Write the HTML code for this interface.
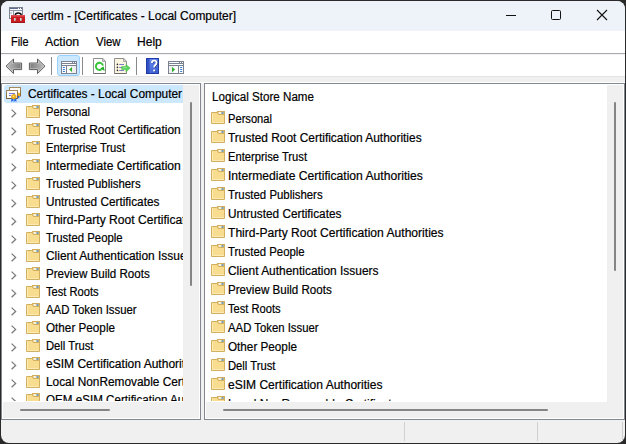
<!DOCTYPE html>
<html><head><meta charset="utf-8"><style>
html,body{margin:0;padding:0;width:626px;height:444px;overflow:hidden;background:#2A2A2A}
.r{position:absolute;box-sizing:content-box}
.fo{position:absolute;overflow:visible}
.t{position:absolute;font-family:"Liberation Sans", sans-serif;font-size:12px;line-height:14px;white-space:nowrap;color:#000;transform-origin:0 0;-webkit-text-stroke:0.2px #000}
</style></head><body>
<div class="r" style="left:1px;top:1px;width:624px;height:442px;background:#f0f0f0;border-radius:8px;overflow:hidden">
<div class="r" style="left:0;top:0;width:624px;height:30px;background:#EEF2F9"></div>
<div class="r" style="left:0;top:30px;width:624px;height:22px;background:#fff"></div>
<div class="r" style="left:0;top:52px;width:624px;height:1px;background:#A9A9A9"></div>
<div class="r" style="left:0;top:53px;width:624px;height:22px;background:#fff"></div>
<div class="r" style="left:0;top:53px;width:624px;height:1px;background:#F1F3F8"></div>
<div class="r" style="left:0;top:75px;width:624px;height:1px;background:#E3E3E3"></div>
</div>
<svg class="fo" width="20" height="20" viewBox="0 0 20 20" style="left:7px;top:5px">
<rect x="2.5" y="2.5" width="13" height="11" fill="#F6F8FB" stroke="#7D8491"/>
<rect x="3" y="3" width="8" height="1" fill="#5D6C8C"/>
<rect x="12" y="3" width="1" height="1" fill="#5D6C8C"/><rect x="14" y="3" width="1" height="1" fill="#5D6C8C"/>
<rect x="3" y="5" width="12" height="1" fill="#8D97A8"/>
<rect x="6" y="6" width="1" height="7" fill="#8D97A8"/>
<rect x="3.5" y="7.5" width="1.2" height="1" fill="#5D6C8C"/>
<path d="M8.2 10.5Q8.2 8 11.2 8Q14.3 8 14.3 10.5" stroke="#111" stroke-width="1.4" fill="none"/>
<rect x="4" y="10" width="14" height="8" fill="#C81C22"/>
<rect x="4" y="10" width="14" height="1.6" fill="#E04A4E"/>
<rect x="4" y="17" width="14" height="1" fill="#9E1418"/>
<rect x="7" y="13" width="1.6" height="2.8" fill="#C9DCD8"/>
<rect x="13" y="13" width="1.6" height="2.8" fill="#C9DCD8"/>
</svg>
<div class="t" style="left:31px;top:9px;transform:scaleX(0.9981);">certlm - [Certificates - Local Computer]</div>
<div class="r" style="left:506px;top:15px;width:10px;height:1px;background:#111"></div>
<div class="r" style="left:551px;top:10px;width:8px;height:8px;border:1px solid #111;border-radius:1.5px"></div>
<svg class="fo" width="12" height="12" viewBox="0 0 12 12" style="left:596px;top:9px"><path d="M1 1L11 11M11 1L1 11" stroke="#111" stroke-width="1.1"/></svg>
<div class="t" style="left:11px;top:35px;transform:scaleX(0.9099);">File</div>
<div class="t" style="left:45px;top:35px;transform:scaleX(1.0252);">Action</div>
<div class="t" style="left:96px;top:35px;transform:scaleX(0.9497);">View</div>
<div class="t" style="left:137px;top:35px;transform:scaleX(1.0046);">Help</div>
<svg class="fo" width="20" height="17" viewBox="0 0 20 17" style="left:4px;top:58px">
<defs><linearGradient id="ga" x1="0" y1="0" x2="1" y2="0"><stop offset="0" stop-color="#B8B8B8"/><stop offset="1" stop-color="#7E7E7E"/></linearGradient>
<linearGradient id="gb" x1="1" y1="0" x2="0" y2="0"><stop offset="0" stop-color="#B8B8B8"/><stop offset="1" stop-color="#7E7E7E"/></linearGradient></defs>
<path d="M2 8.2L9.5 1V5H17.6V11.6H9.5V15.6Z" fill="#CFCFCF" stroke="#5E5E5E" stroke-linejoin="round"/>
<path d="M3.6 8.2L8.5 3.4V6H16.6V10.6H8.5V13.2Z" fill="url(#ga)"/>
</svg>
<svg class="fo" width="20" height="17" viewBox="0 0 20 17" style="left:27px;top:58px">
<path d="M18 8.2L10.5 1V5H2.4V11.6H10.5V15.6Z" fill="#CFCFCF" stroke="#5E5E5E" stroke-linejoin="round"/>
<path d="M16.4 8.2L11.5 3.4V6H3.4V10.6H11.5V13.2Z" fill="url(#gb)"/>
</svg>
<div class="r" style="left:51px;top:57px;width:1px;height:18px;background:#8a8a8a"></div>
<div class="r" style="left:57px;top:55px;width:21px;height:19px;background:#CCE8FF;border:1px solid #99D1FF;border-radius:3px"></div>
<svg class="fo" width="16" height="13" viewBox="0 0 16 13" style="left:61px;top:61px">
<rect x="0.5" y="0.5" width="15" height="12" fill="#fff" stroke="#7A8190"/>
<rect x="1" y="2" width="14" height="1" fill="#7A8190"/>
<rect x="1" y="4" width="14" height="1" fill="#7A8190"/>
<rect x="11" y="1" width="1" height="1" fill="#7A8190"/><rect x="13" y="1" width="1" height="1" fill="#7A8190"/>
<rect x="5" y="5" width="1" height="7" fill="#7A8190"/>
<rect x="10" y="5" width="5" height="7" fill="#F0F0F0"/>
<rect x="1.7" y="6" width="2.3" height="1" rx="0.5" fill="#3A7BD5"/><rect x="1.7" y="8" width="2.3" height="1" rx="0.5" fill="#3A7BD5"/><rect x="1.7" y="10" width="2.3" height="1" rx="0.5" fill="#3A7BD5"/>
<path d="M8 8.5L11 6V11Z" fill="#2FB02F"/>
</svg>
<div class="r" style="left:82px;top:57px;width:1px;height:18px;background:#8a8a8a"></div>
<svg class="fo" width="14" height="17" viewBox="0 0 14 17" style="left:93px;top:58px">
<path d="M0.5 0.5H9.8L12.5 3.2V15.5H0.5Z" fill="#fff" stroke="#8E8E8E"/>
<path d="M0.5 15.5H12.5" stroke="#6E6E6E"/>
<path d="M9.5 0.8V3.5H12.3Z" fill="#E4E4E4" stroke="#9a9a9a" stroke-width="0.8"/>
<path d="M10 7.6A3.6 3.6 0 1 0 8.6 11.3" stroke="#36C436" stroke-width="1.9" fill="none"/>
<path d="M7.2 10.6L11.8 12.9L10.6 8.4Z" fill="#22AE22"/>
</svg>
<svg class="fo" width="18" height="17" viewBox="0 0 18 17" style="left:114px;top:58px">
<path d="M0.5 0.5H9.8L12.5 3.2V15.5H0.5Z" fill="#FCF6E0" stroke="#8E8E8E"/>
<path d="M0.5 15.5H12.5" stroke="#6E6E6E"/>
<path d="M9.5 0.8V3.5H12.3Z" fill="#E8E8E8" stroke="#9a9a9a" stroke-width="0.8"/>
<circle cx="3.4" cy="6.4" r="0.8" fill="#222"/><circle cx="3.4" cy="9.4" r="0.8" fill="#222"/><circle cx="3.4" cy="12.4" r="0.8" fill="#222"/>
<rect x="5.2" y="6" width="4.8" height="1" fill="#7C7CC8"/><rect x="5.2" y="9" width="4.8" height="1" fill="#7C7CC8"/><rect x="5.2" y="12" width="4.8" height="1" fill="#7C7CC8"/>
<path d="M7.7 8.6H12V6.6L16.2 10.1L12 14.1V11.6H7.7Z" fill="#5CD45C" stroke="#44B444" stroke-width="0.5"/>
<path d="M8.5 9.6H13" stroke="#9BE69B" stroke-width="0.8"/>
</svg>
<div class="r" style="left:136px;top:57px;width:1px;height:18px;background:#8a8a8a"></div>
<svg class="fo" width="14" height="17" viewBox="0 0 14 17" style="left:146px;top:58px">
<defs><linearGradient id="gh" x1="0" y1="0" x2="0.6" y2="1"><stop offset="0" stop-color="#6C90F0"/><stop offset="1" stop-color="#3F62D4"/></linearGradient></defs>
<rect x="0.5" y="0.5" width="12" height="15" fill="url(#gh)" stroke="#1F3BA8"/>
<rect x="1" y="1" width="2.5" height="14" fill="#3252C4"/>
<path d="M5.9 4.9Q5.9 2.6 8.2 2.6Q10.6 2.6 10.6 4.8Q10.6 6.3 9.2 7.1Q8.2 7.7 8.2 9.6" stroke="#1A2C7A" stroke-width="1.8" fill="none" transform="translate(0.5,0.4)"/>
<rect x="7.8" y="12.2" width="2" height="1.6" fill="#1A2C7A"/>
<path d="M5.9 4.9Q5.9 2.6 8.2 2.6Q10.6 2.6 10.6 4.8Q10.6 6.3 9.2 7.1Q8.2 7.7 8.2 9.6" stroke="#fff" stroke-width="1.8" fill="none"/>
<rect x="7.2" y="11.6" width="2" height="1.8" fill="#fff"/>
</svg>
<svg class="fo" width="16" height="13" viewBox="0 0 16 13" style="left:168px;top:61px">
<rect x="0.5" y="0.5" width="15" height="12" fill="#fff" stroke="#7A8190"/>
<rect x="1" y="2" width="14" height="1" fill="#7A8190"/>
<rect x="1" y="4" width="14" height="1" fill="#7A8190"/>
<rect x="11" y="1" width="1" height="1" fill="#7A8190"/><rect x="13" y="1" width="1" height="1" fill="#7A8190"/>
<rect x="10" y="5" width="1" height="7" fill="#7A8190"/>
<rect x="1" y="5" width="5" height="7" fill="#F0F0F0"/>
<rect x="12" y="6" width="2.3" height="1" rx="0.5" fill="#3A7BD5"/><rect x="12" y="8" width="2.3" height="1" rx="0.5" fill="#3A7BD5"/><rect x="12" y="10" width="2.3" height="1" rx="0.5" fill="#3A7BD5"/>
<path d="M4 6L7.2 8.6L4 11.2Z" fill="#2FB02F"/>
</svg>
<div class="r" style="left:1px;top:82px;width:624px;height:1px;background:#fff"></div>
<div class="r" style="left:1px;top:83px;width:198px;height:335px;border:1px solid #828790;background:#fff"></div>
<div class="r" style="left:204px;top:83px;width:419px;height:335px;border:1px solid #828790;background:#fff"></div>
<div class="r" style="left:2px;top:84px;width:181px;height:317px;overflow:hidden;background:#fff">
<div class="r" style="left:2px;top:1px;width:181px;height:18px;background:#CCE8FF;border-radius:3px"></div>
<svg class="fo" width="20" height="18" viewBox="0 0 20 18" style="left:2px;top:1px">
<defs><linearGradient id="gc" x1="0" y1="0" x2="0" y2="1"><stop offset="0" stop-color="#A88A5C"/><stop offset="1" stop-color="#7E5E30"/></linearGradient></defs>
<rect x="5.5" y="2.5" width="11" height="8.5" fill="#FFFDF6" stroke="url(#gc)"/>
<path d="M13.4 10.6L13.4 13.6L14.3 12.9L15.2 13.6L15.2 10.6Z" fill="#2266E6"/>
<circle cx="14.6" cy="9.4" r="1.6" fill="#F2A81A"/>
<rect x="2.5" y="5.5" width="11" height="8" fill="#FFFDF6" stroke="url(#gc)"/>
<rect x="5" y="8" width="6" height="1" fill="#7A7AD2"/><rect x="5" y="10" width="2" height="1" fill="#7A7AD2"/>
<path d="M7.4 12.8L7.2 16.9L8.6 15.9L9.4 16.9L9.8 12.8Z" fill="#2266E6"/>
<path d="M10.0 12.8L10.4 16.9L11.3 15.9L12.5 16.9L12.2 12.8Z" fill="#2266E6"/>
<circle cx="9.8" cy="11.7" r="2.3" fill="#F5B81E" stroke="#D99010" stroke-width="0.8"/>
<circle cx="9.5" cy="11.3" r="0.9" fill="#FFD870"/>
</svg>
<div class="t" style="left:26px;top:3px;transform:scaleX(0.9911);">Certificates - Local Computer</div>
<svg class="fo" width="7" height="10" viewBox="0 0 7 10" style="left:9px;top:25px"><path d="M0.6 0.6L4.6 4.4L0.6 8.2" stroke="#7a7a7a" stroke-width="1.3" fill="none"/></svg>
<svg class="fo" width="14" height="13" viewBox="0 0 14 13" style="left:24px;top:21px">
<rect x="6.5" y="0.5" width="7" height="3.5" fill="#EACB78" stroke="#D0AE5C"/>
<rect x="7.5" y="1.3" width="3" height="1.4" fill="#fff"/><rect x="10.5" y="1.3" width="2" height="1.4" fill="#3D8BE0"/>
<path d="M0.5 1.5H6.3L7.3 3.5H13.5V12.5H0.5Z" fill="#F8DD90" stroke="#D2B060"/>
<path d="M1.5 2.6V11.5H12.5" stroke="#FCEBB5" fill="none"/>
</svg>
<div class="t" style="left:44px;top:21px;transform:scaleX(0.9288);">Personal</div>
<svg class="fo" width="7" height="10" viewBox="0 0 7 10" style="left:9px;top:43px"><path d="M0.6 0.6L4.6 4.4L0.6 8.2" stroke="#7a7a7a" stroke-width="1.3" fill="none"/></svg>
<svg class="fo" width="14" height="13" viewBox="0 0 14 13" style="left:24px;top:39px">
<rect x="6.5" y="0.5" width="7" height="3.5" fill="#EACB78" stroke="#D0AE5C"/>
<rect x="7.5" y="1.3" width="3" height="1.4" fill="#fff"/><rect x="10.5" y="1.3" width="2" height="1.4" fill="#3D8BE0"/>
<path d="M0.5 1.5H6.3L7.3 3.5H13.5V12.5H0.5Z" fill="#F8DD90" stroke="#D2B060"/>
<path d="M1.5 2.6V11.5H12.5" stroke="#FCEBB5" fill="none"/>
</svg>
<div class="t" style="left:44px;top:39px;transform:scaleX(0.9929);">Trusted Root Certification Authorities</div>
<svg class="fo" width="7" height="10" viewBox="0 0 7 10" style="left:9px;top:61px"><path d="M0.6 0.6L4.6 4.4L0.6 8.2" stroke="#7a7a7a" stroke-width="1.3" fill="none"/></svg>
<svg class="fo" width="14" height="13" viewBox="0 0 14 13" style="left:24px;top:57px">
<rect x="6.5" y="0.5" width="7" height="3.5" fill="#EACB78" stroke="#D0AE5C"/>
<rect x="7.5" y="1.3" width="3" height="1.4" fill="#fff"/><rect x="10.5" y="1.3" width="2" height="1.4" fill="#3D8BE0"/>
<path d="M0.5 1.5H6.3L7.3 3.5H13.5V12.5H0.5Z" fill="#F8DD90" stroke="#D2B060"/>
<path d="M1.5 2.6V11.5H12.5" stroke="#FCEBB5" fill="none"/>
</svg>
<div class="t" style="left:44px;top:57px;transform:scaleX(0.9327);">Enterprise Trust</div>
<svg class="fo" width="7" height="10" viewBox="0 0 7 10" style="left:9px;top:79px"><path d="M0.6 0.6L4.6 4.4L0.6 8.2" stroke="#7a7a7a" stroke-width="1.3" fill="none"/></svg>
<svg class="fo" width="14" height="13" viewBox="0 0 14 13" style="left:24px;top:75px">
<rect x="6.5" y="0.5" width="7" height="3.5" fill="#EACB78" stroke="#D0AE5C"/>
<rect x="7.5" y="1.3" width="3" height="1.4" fill="#fff"/><rect x="10.5" y="1.3" width="2" height="1.4" fill="#3D8BE0"/>
<path d="M0.5 1.5H6.3L7.3 3.5H13.5V12.5H0.5Z" fill="#F8DD90" stroke="#D2B060"/>
<path d="M1.5 2.6V11.5H12.5" stroke="#FCEBB5" fill="none"/>
</svg>
<div class="t" style="left:44px;top:75px;transform:scaleX(1.0106);">Intermediate Certification Authorities</div>
<svg class="fo" width="7" height="10" viewBox="0 0 7 10" style="left:9px;top:97px"><path d="M0.6 0.6L4.6 4.4L0.6 8.2" stroke="#7a7a7a" stroke-width="1.3" fill="none"/></svg>
<svg class="fo" width="14" height="13" viewBox="0 0 14 13" style="left:24px;top:93px">
<rect x="6.5" y="0.5" width="7" height="3.5" fill="#EACB78" stroke="#D0AE5C"/>
<rect x="7.5" y="1.3" width="3" height="1.4" fill="#fff"/><rect x="10.5" y="1.3" width="2" height="1.4" fill="#3D8BE0"/>
<path d="M0.5 1.5H6.3L7.3 3.5H13.5V12.5H0.5Z" fill="#F8DD90" stroke="#D2B060"/>
<path d="M1.5 2.6V11.5H12.5" stroke="#FCEBB5" fill="none"/>
</svg>
<div class="t" style="left:44px;top:93px;transform:scaleX(0.9497);">Trusted Publishers</div>
<svg class="fo" width="7" height="10" viewBox="0 0 7 10" style="left:9px;top:115px"><path d="M0.6 0.6L4.6 4.4L0.6 8.2" stroke="#7a7a7a" stroke-width="1.3" fill="none"/></svg>
<svg class="fo" width="14" height="13" viewBox="0 0 14 13" style="left:24px;top:111px">
<rect x="6.5" y="0.5" width="7" height="3.5" fill="#EACB78" stroke="#D0AE5C"/>
<rect x="7.5" y="1.3" width="3" height="1.4" fill="#fff"/><rect x="10.5" y="1.3" width="2" height="1.4" fill="#3D8BE0"/>
<path d="M0.5 1.5H6.3L7.3 3.5H13.5V12.5H0.5Z" fill="#F8DD90" stroke="#D2B060"/>
<path d="M1.5 2.6V11.5H12.5" stroke="#FCEBB5" fill="none"/>
</svg>
<div class="t" style="left:44px;top:111px;transform:scaleX(0.9827);">Untrusted Certificates</div>
<svg class="fo" width="7" height="10" viewBox="0 0 7 10" style="left:9px;top:133px"><path d="M0.6 0.6L4.6 4.4L0.6 8.2" stroke="#7a7a7a" stroke-width="1.3" fill="none"/></svg>
<svg class="fo" width="14" height="13" viewBox="0 0 14 13" style="left:24px;top:129px">
<rect x="6.5" y="0.5" width="7" height="3.5" fill="#EACB78" stroke="#D0AE5C"/>
<rect x="7.5" y="1.3" width="3" height="1.4" fill="#fff"/><rect x="10.5" y="1.3" width="2" height="1.4" fill="#3D8BE0"/>
<path d="M0.5 1.5H6.3L7.3 3.5H13.5V12.5H0.5Z" fill="#F8DD90" stroke="#D2B060"/>
<path d="M1.5 2.6V11.5H12.5" stroke="#FCEBB5" fill="none"/>
</svg>
<div class="t" style="left:44px;top:129px;transform:scaleX(1.0070);">Third-Party Root Certification Authorities</div>
<svg class="fo" width="7" height="10" viewBox="0 0 7 10" style="left:9px;top:151px"><path d="M0.6 0.6L4.6 4.4L0.6 8.2" stroke="#7a7a7a" stroke-width="1.3" fill="none"/></svg>
<svg class="fo" width="14" height="13" viewBox="0 0 14 13" style="left:24px;top:147px">
<rect x="6.5" y="0.5" width="7" height="3.5" fill="#EACB78" stroke="#D0AE5C"/>
<rect x="7.5" y="1.3" width="3" height="1.4" fill="#fff"/><rect x="10.5" y="1.3" width="2" height="1.4" fill="#3D8BE0"/>
<path d="M0.5 1.5H6.3L7.3 3.5H13.5V12.5H0.5Z" fill="#F8DD90" stroke="#D2B060"/>
<path d="M1.5 2.6V11.5H12.5" stroke="#FCEBB5" fill="none"/>
</svg>
<div class="t" style="left:44px;top:147px;transform:scaleX(0.9464);">Trusted People</div>
<svg class="fo" width="7" height="10" viewBox="0 0 7 10" style="left:9px;top:169px"><path d="M0.6 0.6L4.6 4.4L0.6 8.2" stroke="#7a7a7a" stroke-width="1.3" fill="none"/></svg>
<svg class="fo" width="14" height="13" viewBox="0 0 14 13" style="left:24px;top:165px">
<rect x="6.5" y="0.5" width="7" height="3.5" fill="#EACB78" stroke="#D0AE5C"/>
<rect x="7.5" y="1.3" width="3" height="1.4" fill="#fff"/><rect x="10.5" y="1.3" width="2" height="1.4" fill="#3D8BE0"/>
<path d="M0.5 1.5H6.3L7.3 3.5H13.5V12.5H0.5Z" fill="#F8DD90" stroke="#D2B060"/>
<path d="M1.5 2.6V11.5H12.5" stroke="#FCEBB5" fill="none"/>
</svg>
<div class="t" style="left:44px;top:165px;transform:scaleX(0.9939);">Client Authentication Issuers</div>
<svg class="fo" width="7" height="10" viewBox="0 0 7 10" style="left:9px;top:187px"><path d="M0.6 0.6L4.6 4.4L0.6 8.2" stroke="#7a7a7a" stroke-width="1.3" fill="none"/></svg>
<svg class="fo" width="14" height="13" viewBox="0 0 14 13" style="left:24px;top:183px">
<rect x="6.5" y="0.5" width="7" height="3.5" fill="#EACB78" stroke="#D0AE5C"/>
<rect x="7.5" y="1.3" width="3" height="1.4" fill="#fff"/><rect x="10.5" y="1.3" width="2" height="1.4" fill="#3D8BE0"/>
<path d="M0.5 1.5H6.3L7.3 3.5H13.5V12.5H0.5Z" fill="#F8DD90" stroke="#D2B060"/>
<path d="M1.5 2.6V11.5H12.5" stroke="#FCEBB5" fill="none"/>
</svg>
<div class="t" style="left:44px;top:183px;transform:scaleX(0.9666);">Preview Build Roots</div>
<svg class="fo" width="7" height="10" viewBox="0 0 7 10" style="left:9px;top:205px"><path d="M0.6 0.6L4.6 4.4L0.6 8.2" stroke="#7a7a7a" stroke-width="1.3" fill="none"/></svg>
<svg class="fo" width="14" height="13" viewBox="0 0 14 13" style="left:24px;top:201px">
<rect x="6.5" y="0.5" width="7" height="3.5" fill="#EACB78" stroke="#D0AE5C"/>
<rect x="7.5" y="1.3" width="3" height="1.4" fill="#fff"/><rect x="10.5" y="1.3" width="2" height="1.4" fill="#3D8BE0"/>
<path d="M0.5 1.5H6.3L7.3 3.5H13.5V12.5H0.5Z" fill="#F8DD90" stroke="#D2B060"/>
<path d="M1.5 2.6V11.5H12.5" stroke="#FCEBB5" fill="none"/>
</svg>
<div class="t" style="left:44px;top:201px;transform:scaleX(0.9294);">Test Roots</div>
<svg class="fo" width="7" height="10" viewBox="0 0 7 10" style="left:9px;top:223px"><path d="M0.6 0.6L4.6 4.4L0.6 8.2" stroke="#7a7a7a" stroke-width="1.3" fill="none"/></svg>
<svg class="fo" width="14" height="13" viewBox="0 0 14 13" style="left:24px;top:219px">
<rect x="6.5" y="0.5" width="7" height="3.5" fill="#EACB78" stroke="#D0AE5C"/>
<rect x="7.5" y="1.3" width="3" height="1.4" fill="#fff"/><rect x="10.5" y="1.3" width="2" height="1.4" fill="#3D8BE0"/>
<path d="M0.5 1.5H6.3L7.3 3.5H13.5V12.5H0.5Z" fill="#F8DD90" stroke="#D2B060"/>
<path d="M1.5 2.6V11.5H12.5" stroke="#FCEBB5" fill="none"/>
</svg>
<div class="t" style="left:44px;top:219px;transform:scaleX(0.9454);">AAD Token Issuer</div>
<svg class="fo" width="7" height="10" viewBox="0 0 7 10" style="left:9px;top:241px"><path d="M0.6 0.6L4.6 4.4L0.6 8.2" stroke="#7a7a7a" stroke-width="1.3" fill="none"/></svg>
<svg class="fo" width="14" height="13" viewBox="0 0 14 13" style="left:24px;top:237px">
<rect x="6.5" y="0.5" width="7" height="3.5" fill="#EACB78" stroke="#D0AE5C"/>
<rect x="7.5" y="1.3" width="3" height="1.4" fill="#fff"/><rect x="10.5" y="1.3" width="2" height="1.4" fill="#3D8BE0"/>
<path d="M0.5 1.5H6.3L7.3 3.5H13.5V12.5H0.5Z" fill="#F8DD90" stroke="#D2B060"/>
<path d="M1.5 2.6V11.5H12.5" stroke="#FCEBB5" fill="none"/>
</svg>
<div class="t" style="left:44px;top:237px;transform:scaleX(0.9757);">Other People</div>
<svg class="fo" width="7" height="10" viewBox="0 0 7 10" style="left:9px;top:259px"><path d="M0.6 0.6L4.6 4.4L0.6 8.2" stroke="#7a7a7a" stroke-width="1.3" fill="none"/></svg>
<svg class="fo" width="14" height="13" viewBox="0 0 14 13" style="left:24px;top:255px">
<rect x="6.5" y="0.5" width="7" height="3.5" fill="#EACB78" stroke="#D0AE5C"/>
<rect x="7.5" y="1.3" width="3" height="1.4" fill="#fff"/><rect x="10.5" y="1.3" width="2" height="1.4" fill="#3D8BE0"/>
<path d="M0.5 1.5H6.3L7.3 3.5H13.5V12.5H0.5Z" fill="#F8DD90" stroke="#D2B060"/>
<path d="M1.5 2.6V11.5H12.5" stroke="#FCEBB5" fill="none"/>
</svg>
<div class="t" style="left:44px;top:255px;transform:scaleX(0.9371);">Dell Trust</div>
<svg class="fo" width="7" height="10" viewBox="0 0 7 10" style="left:9px;top:277px"><path d="M0.6 0.6L4.6 4.4L0.6 8.2" stroke="#7a7a7a" stroke-width="1.3" fill="none"/></svg>
<svg class="fo" width="14" height="13" viewBox="0 0 14 13" style="left:24px;top:273px">
<rect x="6.5" y="0.5" width="7" height="3.5" fill="#EACB78" stroke="#D0AE5C"/>
<rect x="7.5" y="1.3" width="3" height="1.4" fill="#fff"/><rect x="10.5" y="1.3" width="2" height="1.4" fill="#3D8BE0"/>
<path d="M0.5 1.5H6.3L7.3 3.5H13.5V12.5H0.5Z" fill="#F8DD90" stroke="#D2B060"/>
<path d="M1.5 2.6V11.5H12.5" stroke="#FCEBB5" fill="none"/>
</svg>
<div class="t" style="left:44px;top:273px;transform:scaleX(1.0027);">eSIM Certification Authorities</div>
<svg class="fo" width="7" height="10" viewBox="0 0 7 10" style="left:9px;top:295px"><path d="M0.6 0.6L4.6 4.4L0.6 8.2" stroke="#7a7a7a" stroke-width="1.3" fill="none"/></svg>
<svg class="fo" width="14" height="13" viewBox="0 0 14 13" style="left:24px;top:291px">
<rect x="6.5" y="0.5" width="7" height="3.5" fill="#EACB78" stroke="#D0AE5C"/>
<rect x="7.5" y="1.3" width="3" height="1.4" fill="#fff"/><rect x="10.5" y="1.3" width="2" height="1.4" fill="#3D8BE0"/>
<path d="M0.5 1.5H6.3L7.3 3.5H13.5V12.5H0.5Z" fill="#F8DD90" stroke="#D2B060"/>
<path d="M1.5 2.6V11.5H12.5" stroke="#FCEBB5" fill="none"/>
</svg>
<div class="t" style="left:44px;top:291px;transform:scaleX(0.9882);">Local NonRemovable Certificates</div>
<svg class="fo" width="7" height="10" viewBox="0 0 7 10" style="left:9px;top:313px"><path d="M0.6 0.6L4.6 4.4L0.6 8.2" stroke="#7a7a7a" stroke-width="1.3" fill="none"/></svg>
<svg class="fo" width="14" height="13" viewBox="0 0 14 13" style="left:24px;top:309px">
<rect x="6.5" y="0.5" width="7" height="3.5" fill="#EACB78" stroke="#D0AE5C"/>
<rect x="7.5" y="1.3" width="3" height="1.4" fill="#fff"/><rect x="10.5" y="1.3" width="2" height="1.4" fill="#3D8BE0"/>
<path d="M0.5 1.5H6.3L7.3 3.5H13.5V12.5H0.5Z" fill="#F8DD90" stroke="#D2B060"/>
<path d="M1.5 2.6V11.5H12.5" stroke="#FCEBB5" fill="none"/>
</svg>
<div class="t" style="left:44px;top:309px;transform:scaleX(0.9690);">OEM eSIM Certification Authorities</div>
</div>
<div class="r" style="left:183px;top:85px;width:16px;height:317px;background:#F0F0F0"></div>
<div class="r" style="left:190px;top:102px;width:2px;height:184px;background:#858585;border-radius:1px"></div>
<div class="r" style="left:3px;top:402px;width:196px;height:16px;background:#F0F0F0"></div>
<div class="r" style="left:20px;top:409px;width:90px;height:2px;background:#858585;border-radius:1px"></div>
<div class="r" style="left:205px;top:84px;width:402px;height:317px;overflow:hidden;background:#fff">
<div class="t" style="left:7px;top:6px;transform:scaleX(0.9678);">Logical Store Name</div>
<svg class="fo" width="14" height="13" viewBox="0 0 14 13" style="left:6px;top:27px">
<rect x="6.5" y="0.5" width="7" height="3.5" fill="#EACB78" stroke="#D0AE5C"/>
<rect x="7.5" y="1.3" width="3" height="1.4" fill="#fff"/><rect x="10.5" y="1.3" width="2" height="1.4" fill="#3D8BE0"/>
<path d="M0.5 1.5H6.3L7.3 3.5H13.5V12.5H0.5Z" fill="#F8DD90" stroke="#D2B060"/>
<path d="M1.5 2.6V11.5H12.5" stroke="#FCEBB5" fill="none"/>
</svg>
<div class="t" style="left:23px;top:28px;transform:scaleX(0.9288);">Personal</div>
<svg class="fo" width="14" height="13" viewBox="0 0 14 13" style="left:6px;top:46px">
<rect x="6.5" y="0.5" width="7" height="3.5" fill="#EACB78" stroke="#D0AE5C"/>
<rect x="7.5" y="1.3" width="3" height="1.4" fill="#fff"/><rect x="10.5" y="1.3" width="2" height="1.4" fill="#3D8BE0"/>
<path d="M0.5 1.5H6.3L7.3 3.5H13.5V12.5H0.5Z" fill="#F8DD90" stroke="#D2B060"/>
<path d="M1.5 2.6V11.5H12.5" stroke="#FCEBB5" fill="none"/>
</svg>
<div class="t" style="left:23px;top:47px;transform:scaleX(0.9929);">Trusted Root Certification Authorities</div>
<svg class="fo" width="14" height="13" viewBox="0 0 14 13" style="left:6px;top:65px">
<rect x="6.5" y="0.5" width="7" height="3.5" fill="#EACB78" stroke="#D0AE5C"/>
<rect x="7.5" y="1.3" width="3" height="1.4" fill="#fff"/><rect x="10.5" y="1.3" width="2" height="1.4" fill="#3D8BE0"/>
<path d="M0.5 1.5H6.3L7.3 3.5H13.5V12.5H0.5Z" fill="#F8DD90" stroke="#D2B060"/>
<path d="M1.5 2.6V11.5H12.5" stroke="#FCEBB5" fill="none"/>
</svg>
<div class="t" style="left:23px;top:66px;transform:scaleX(0.9327);">Enterprise Trust</div>
<svg class="fo" width="14" height="13" viewBox="0 0 14 13" style="left:6px;top:84px">
<rect x="6.5" y="0.5" width="7" height="3.5" fill="#EACB78" stroke="#D0AE5C"/>
<rect x="7.5" y="1.3" width="3" height="1.4" fill="#fff"/><rect x="10.5" y="1.3" width="2" height="1.4" fill="#3D8BE0"/>
<path d="M0.5 1.5H6.3L7.3 3.5H13.5V12.5H0.5Z" fill="#F8DD90" stroke="#D2B060"/>
<path d="M1.5 2.6V11.5H12.5" stroke="#FCEBB5" fill="none"/>
</svg>
<div class="t" style="left:23px;top:85px;transform:scaleX(1.0106);">Intermediate Certification Authorities</div>
<svg class="fo" width="14" height="13" viewBox="0 0 14 13" style="left:6px;top:103px">
<rect x="6.5" y="0.5" width="7" height="3.5" fill="#EACB78" stroke="#D0AE5C"/>
<rect x="7.5" y="1.3" width="3" height="1.4" fill="#fff"/><rect x="10.5" y="1.3" width="2" height="1.4" fill="#3D8BE0"/>
<path d="M0.5 1.5H6.3L7.3 3.5H13.5V12.5H0.5Z" fill="#F8DD90" stroke="#D2B060"/>
<path d="M1.5 2.6V11.5H12.5" stroke="#FCEBB5" fill="none"/>
</svg>
<div class="t" style="left:23px;top:104px;transform:scaleX(0.9497);">Trusted Publishers</div>
<svg class="fo" width="14" height="13" viewBox="0 0 14 13" style="left:6px;top:122px">
<rect x="6.5" y="0.5" width="7" height="3.5" fill="#EACB78" stroke="#D0AE5C"/>
<rect x="7.5" y="1.3" width="3" height="1.4" fill="#fff"/><rect x="10.5" y="1.3" width="2" height="1.4" fill="#3D8BE0"/>
<path d="M0.5 1.5H6.3L7.3 3.5H13.5V12.5H0.5Z" fill="#F8DD90" stroke="#D2B060"/>
<path d="M1.5 2.6V11.5H12.5" stroke="#FCEBB5" fill="none"/>
</svg>
<div class="t" style="left:23px;top:123px;transform:scaleX(0.9827);">Untrusted Certificates</div>
<svg class="fo" width="14" height="13" viewBox="0 0 14 13" style="left:6px;top:141px">
<rect x="6.5" y="0.5" width="7" height="3.5" fill="#EACB78" stroke="#D0AE5C"/>
<rect x="7.5" y="1.3" width="3" height="1.4" fill="#fff"/><rect x="10.5" y="1.3" width="2" height="1.4" fill="#3D8BE0"/>
<path d="M0.5 1.5H6.3L7.3 3.5H13.5V12.5H0.5Z" fill="#F8DD90" stroke="#D2B060"/>
<path d="M1.5 2.6V11.5H12.5" stroke="#FCEBB5" fill="none"/>
</svg>
<div class="t" style="left:23px;top:142px;transform:scaleX(1.0070);">Third-Party Root Certification Authorities</div>
<svg class="fo" width="14" height="13" viewBox="0 0 14 13" style="left:6px;top:160px">
<rect x="6.5" y="0.5" width="7" height="3.5" fill="#EACB78" stroke="#D0AE5C"/>
<rect x="7.5" y="1.3" width="3" height="1.4" fill="#fff"/><rect x="10.5" y="1.3" width="2" height="1.4" fill="#3D8BE0"/>
<path d="M0.5 1.5H6.3L7.3 3.5H13.5V12.5H0.5Z" fill="#F8DD90" stroke="#D2B060"/>
<path d="M1.5 2.6V11.5H12.5" stroke="#FCEBB5" fill="none"/>
</svg>
<div class="t" style="left:23px;top:161px;transform:scaleX(0.9464);">Trusted People</div>
<svg class="fo" width="14" height="13" viewBox="0 0 14 13" style="left:6px;top:179px">
<rect x="6.5" y="0.5" width="7" height="3.5" fill="#EACB78" stroke="#D0AE5C"/>
<rect x="7.5" y="1.3" width="3" height="1.4" fill="#fff"/><rect x="10.5" y="1.3" width="2" height="1.4" fill="#3D8BE0"/>
<path d="M0.5 1.5H6.3L7.3 3.5H13.5V12.5H0.5Z" fill="#F8DD90" stroke="#D2B060"/>
<path d="M1.5 2.6V11.5H12.5" stroke="#FCEBB5" fill="none"/>
</svg>
<div class="t" style="left:23px;top:180px;transform:scaleX(0.9939);">Client Authentication Issuers</div>
<svg class="fo" width="14" height="13" viewBox="0 0 14 13" style="left:6px;top:198px">
<rect x="6.5" y="0.5" width="7" height="3.5" fill="#EACB78" stroke="#D0AE5C"/>
<rect x="7.5" y="1.3" width="3" height="1.4" fill="#fff"/><rect x="10.5" y="1.3" width="2" height="1.4" fill="#3D8BE0"/>
<path d="M0.5 1.5H6.3L7.3 3.5H13.5V12.5H0.5Z" fill="#F8DD90" stroke="#D2B060"/>
<path d="M1.5 2.6V11.5H12.5" stroke="#FCEBB5" fill="none"/>
</svg>
<div class="t" style="left:23px;top:199px;transform:scaleX(0.9666);">Preview Build Roots</div>
<svg class="fo" width="14" height="13" viewBox="0 0 14 13" style="left:6px;top:217px">
<rect x="6.5" y="0.5" width="7" height="3.5" fill="#EACB78" stroke="#D0AE5C"/>
<rect x="7.5" y="1.3" width="3" height="1.4" fill="#fff"/><rect x="10.5" y="1.3" width="2" height="1.4" fill="#3D8BE0"/>
<path d="M0.5 1.5H6.3L7.3 3.5H13.5V12.5H0.5Z" fill="#F8DD90" stroke="#D2B060"/>
<path d="M1.5 2.6V11.5H12.5" stroke="#FCEBB5" fill="none"/>
</svg>
<div class="t" style="left:23px;top:218px;transform:scaleX(0.9294);">Test Roots</div>
<svg class="fo" width="14" height="13" viewBox="0 0 14 13" style="left:6px;top:236px">
<rect x="6.5" y="0.5" width="7" height="3.5" fill="#EACB78" stroke="#D0AE5C"/>
<rect x="7.5" y="1.3" width="3" height="1.4" fill="#fff"/><rect x="10.5" y="1.3" width="2" height="1.4" fill="#3D8BE0"/>
<path d="M0.5 1.5H6.3L7.3 3.5H13.5V12.5H0.5Z" fill="#F8DD90" stroke="#D2B060"/>
<path d="M1.5 2.6V11.5H12.5" stroke="#FCEBB5" fill="none"/>
</svg>
<div class="t" style="left:23px;top:237px;transform:scaleX(0.9454);">AAD Token Issuer</div>
<svg class="fo" width="14" height="13" viewBox="0 0 14 13" style="left:6px;top:255px">
<rect x="6.5" y="0.5" width="7" height="3.5" fill="#EACB78" stroke="#D0AE5C"/>
<rect x="7.5" y="1.3" width="3" height="1.4" fill="#fff"/><rect x="10.5" y="1.3" width="2" height="1.4" fill="#3D8BE0"/>
<path d="M0.5 1.5H6.3L7.3 3.5H13.5V12.5H0.5Z" fill="#F8DD90" stroke="#D2B060"/>
<path d="M1.5 2.6V11.5H12.5" stroke="#FCEBB5" fill="none"/>
</svg>
<div class="t" style="left:23px;top:256px;transform:scaleX(0.9757);">Other People</div>
<svg class="fo" width="14" height="13" viewBox="0 0 14 13" style="left:6px;top:274px">
<rect x="6.5" y="0.5" width="7" height="3.5" fill="#EACB78" stroke="#D0AE5C"/>
<rect x="7.5" y="1.3" width="3" height="1.4" fill="#fff"/><rect x="10.5" y="1.3" width="2" height="1.4" fill="#3D8BE0"/>
<path d="M0.5 1.5H6.3L7.3 3.5H13.5V12.5H0.5Z" fill="#F8DD90" stroke="#D2B060"/>
<path d="M1.5 2.6V11.5H12.5" stroke="#FCEBB5" fill="none"/>
</svg>
<div class="t" style="left:23px;top:275px;transform:scaleX(0.9371);">Dell Trust</div>
<svg class="fo" width="14" height="13" viewBox="0 0 14 13" style="left:6px;top:293px">
<rect x="6.5" y="0.5" width="7" height="3.5" fill="#EACB78" stroke="#D0AE5C"/>
<rect x="7.5" y="1.3" width="3" height="1.4" fill="#fff"/><rect x="10.5" y="1.3" width="2" height="1.4" fill="#3D8BE0"/>
<path d="M0.5 1.5H6.3L7.3 3.5H13.5V12.5H0.5Z" fill="#F8DD90" stroke="#D2B060"/>
<path d="M1.5 2.6V11.5H12.5" stroke="#FCEBB5" fill="none"/>
</svg>
<div class="t" style="left:23px;top:294px;transform:scaleX(1.0027);">eSIM Certification Authorities</div>
<svg class="fo" width="14" height="13" viewBox="0 0 14 13" style="left:6px;top:312px">
<rect x="6.5" y="0.5" width="7" height="3.5" fill="#EACB78" stroke="#D0AE5C"/>
<rect x="7.5" y="1.3" width="3" height="1.4" fill="#fff"/><rect x="10.5" y="1.3" width="2" height="1.4" fill="#3D8BE0"/>
<path d="M0.5 1.5H6.3L7.3 3.5H13.5V12.5H0.5Z" fill="#F8DD90" stroke="#D2B060"/>
<path d="M1.5 2.6V11.5H12.5" stroke="#FCEBB5" fill="none"/>
</svg>
<div class="t" style="left:23px;top:313px;transform:scaleX(0.9882);">Local NonRemovable Certificates</div>
</div>
<div class="r" style="left:607px;top:85px;width:16px;height:317px;background:#F0F0F0"></div>
<div class="r" style="left:614px;top:102px;width:2px;height:169px;background:#858585;border-radius:1px"></div>
<div class="r" style="left:206px;top:402px;width:417px;height:16px;background:#F0F0F0"></div>
<div class="r" style="left:223px;top:409px;width:325px;height:2px;background:#858585;border-radius:1px"></div>
<div class="r" style="left:404px;top:422px;width:1px;height:19px;background:#D0D0D0"></div>
<div class="r" style="left:537px;top:422px;width:1px;height:19px;background:#D0D0D0"></div>
<div class="r" style="left:622px;top:422px;width:1px;height:19px;background:#D0D0D0"></div>
</body></html>
